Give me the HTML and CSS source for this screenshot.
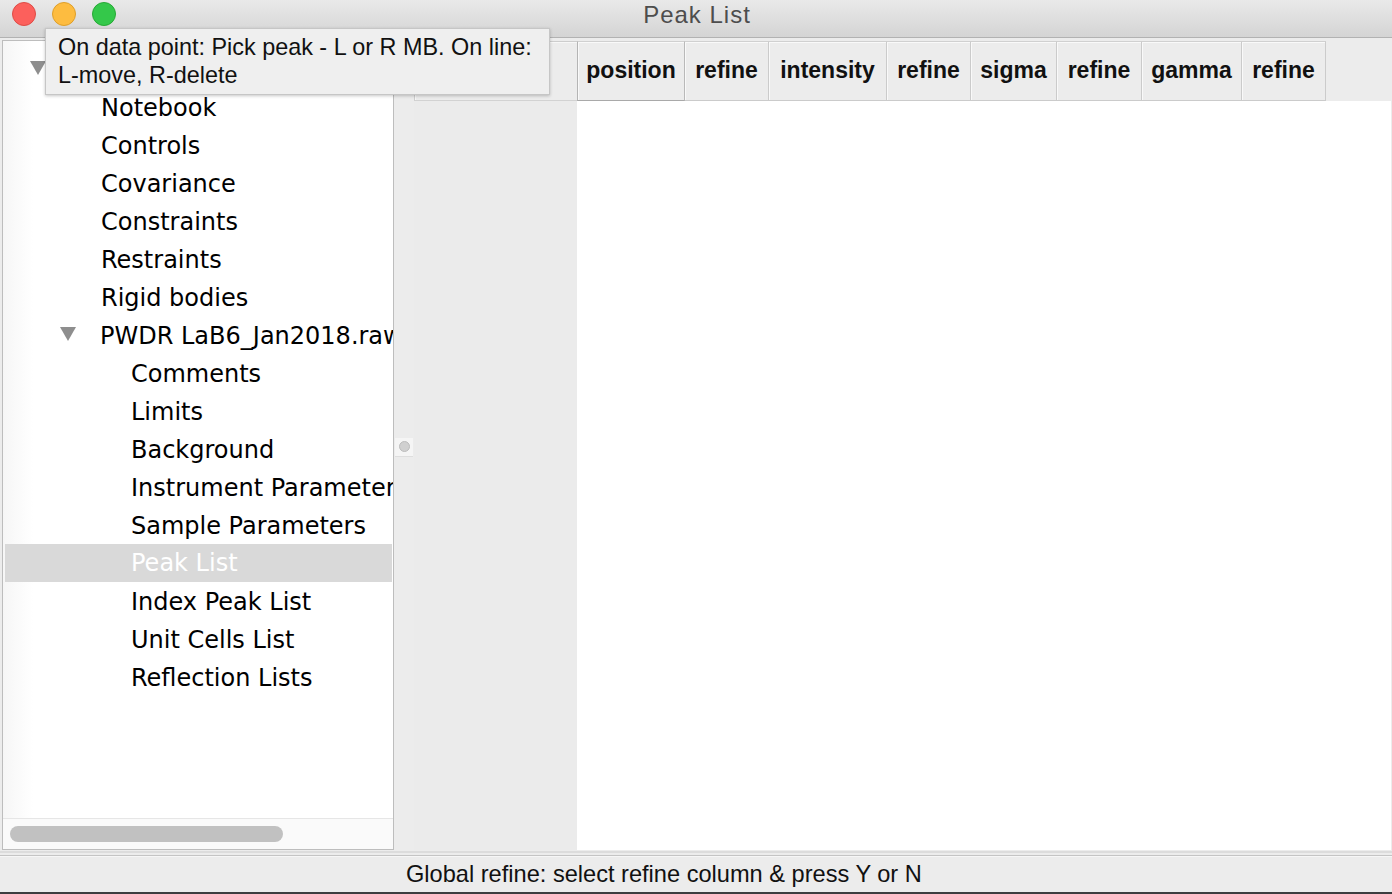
FILE: index.html
```html
<!DOCTYPE html>
<html>
<head>
<meta charset="utf-8">
<title>Peak List</title>
<link rel="stylesheet" href="styles.css">
</head>
<body>
<div class="window">
  <div class="titlebar">
    <div class="lights">
      <span class="light red"></span>
      <span class="light yellow"></span>
      <span class="light green"></span>
    </div>
    <div class="title">Peak List</div>
  </div>

  <div class="main">
    <div class="tree-pane">
      <div class="tree">
        <div class="row root"><span class="tri"></span></div>
        <div class="row l1">Notebook</div>
        <div class="row l1">Controls</div>
        <div class="row l1">Covariance</div>
        <div class="row l1">Constraints</div>
        <div class="row l1">Restraints</div>
        <div class="row l1">Rigid bodies</div>
        <div class="row parent"><span class="tri"></span><span class="lbl">PWDR LaB6_Jan2018.raw</span></div>
        <div class="row l2">Comments</div>
        <div class="row l2">Limits</div>
        <div class="row l2">Background</div>
        <div class="row l2">Instrument Parameters</div>
        <div class="row l2">Sample Parameters</div>
        <div class="row l2 selected">Peak List</div>
        <div class="row l2">Index Peak List</div>
        <div class="row l2">Unit Cells List</div>
        <div class="row l2">Reflection Lists</div>
      </div>
      <div class="hscroll"><div class="thumb"></div></div>
    </div>

    <div class="sash"><span class="knob"><span class="dot"></span></span></div>

    <div class="grid">
      <div class="grid-head">
        <div class="corner"></div>
        <div class="hcell first w108">position</div>
        <div class="hcell w84">refine</div>
        <div class="hcell w118">intensity</div>
        <div class="hcell w84">refine</div>
        <div class="hcell w86">sigma</div>
        <div class="hcell w85">refine</div>
        <div class="hcell w100">gamma</div>
        <div class="hcell w84">refine</div>
        <div class="head-fill"></div>
      </div>
      <div class="grid-body">
        <div class="rowlabels"></div>
        <div class="cells"></div>
      </div>
    </div>
  </div>

  <div class="gap"></div>
  <div class="status">
    <div class="field first-field"></div>
    <div class="field text-field">Global refine: select refine column &amp; press Y or N</div>
  </div>
  <div class="desk"></div>

  <div class="tooltip">On data point: Pick peak - L or R MB. On line:<br>L-move, R-delete</div>
</div>
</body>
</html>
```

FILE: styles.css
```css
* { box-sizing: border-box; }
html, body { margin: 0; padding: 0; }
body {
  width: 1392px;
  height: 894px;
  overflow: hidden;
  background: #ececec;
  font-family: "Liberation Sans", Arial, sans-serif;
}
.window {
  position: relative;
  width: 1392px;
  height: 894px;
  display: flex;
  flex-direction: column;
  background: #ececec;
}

/* title bar */
.titlebar {
  height: 38px;
  flex: none;
  display: flex;
  align-items: center;
  position: relative;
  background: linear-gradient(#e9e9e9, #d4d4d4);
  border-bottom: 1px solid #b2b2b2;
}
.lights {
  display: flex;
  gap: 16px;
  padding-left: 12px;
  margin-top: -9px;
}
.light {
  width: 24px;
  height: 24px;
  border-radius: 50%;
  display: block;
}
.red { background: #fc605c; border: 1px solid #de4c46; }
.yellow { background: #fdbc40; border: 1px solid #de9f2a; }
.green { background: #34c84a; border: 1px solid #27a935; }
.title {
  position: absolute;
  left: 0;
  right: 0;
  top: 0;
  text-align: center;
  font-size: 24px;
  letter-spacing: 1px;
  line-height: 30px;
  color: #4d4d4d;
  padding-left: 2px;
}

/* main area */
.main {
  height: 813px;
  flex: none;
  display: flex;
  padding: 2px 1px 0 2px;
}
.tree-pane {
  width: 392px;
  height: 810px;
  flex: none;
  border: 1px solid #bdbdbd;
  background: #fff;
  display: flex;
  flex-direction: column;
}
.tree {
  flex: 1;
  padding-top: 10px;
  overflow: hidden;
  background: linear-gradient(90deg, #f6f6f6, #ffffff 30px);
}
.row {
  height: 38px;
  display: flex;
  align-items: center;
  font-family: "DejaVu Sans", Verdana, sans-serif;
  font-size: 24px;
  color: #000;
  white-space: nowrap;
  overflow: hidden;
}
.row.root { padding-left: 27px; }
.row.parent { padding-left: 57px; }
.row.l1 { padding-left: 98px; }
.row.l2 { padding-left: 128px; }
.row.selected {
  background: #d9d9d9;
  color: #fff;
  margin: -1px 1px 1px 2px;
  padding-left: 126px;
}
.tri {
  width: 0;
  height: 0;
  border-left: 8px solid transparent;
  border-right: 8px solid transparent;
  border-top: 14px solid #8e8e8e;
  margin-bottom: 5px;
  flex: none;
}
.parent .tri {
  border-left-width: 8.5px;
  border-right-width: 8.5px;
}
.parent .lbl { margin-left: 24px; }
.hscroll {
  height: 31px;
  flex: none;
  border-top: 1px solid #e6e6e6;
  background: #fafafa;
  padding: 7px 0 0 7px;
}
.thumb {
  width: 273px;
  height: 16px;
  border-radius: 8px;
  background: #c1c1c1;
}

/* sash */
.sash {
  width: 20px;
  flex: none;
  display: flex;
  align-items: center;
  justify-content: center;
  padding-top: 3px;
}
.knob {
  width: 18px;
  height: 19px;
  background: #f5f5f5;
  border-bottom: 1px solid #dedede;
  display: flex;
  align-items: center;
  justify-content: center;
}
.dot {
  width: 11px;
  height: 11px;
  border-radius: 50%;
  background: #d0d0d0;
  border: 1px solid #bcbcbc;
}

/* grid */
.grid {
  flex: 1;
  margin-top: 1px;
  height: 809px;
  display: flex;
  flex-direction: column;
}
.grid-head {
  height: 60px;
  flex: none;
  display: flex;
  background: #ececec;
}
.corner {
  width: 163px;
  flex: none;
  border-left: 1px solid #cdcdcd;
  border-top: 1px solid #cdcdcd;
  border-bottom: 1px solid #d2d2d2;
  box-shadow: inset 1px 1px 0 #f7f7f7;
}
.hcell {
  flex: none;
  display: flex;
  align-items: center;
  justify-content: center;
  font-weight: bold;
  font-size: 23px;
  color: #111;
  border-top: 1px solid #d0d0d0;
  border-right: 1px solid #cbcbcb;
  border-bottom: 1px solid #cbcbcb;
  box-shadow: inset 1px 1px 0 #f9f9f9;
  padding-bottom: 1px;
}
.hcell.first {
  border-left: 1px solid #b4b4b4;
  border-bottom: 1px solid #a9a9a9;
  border-right: 1px solid #b9b9b9;
}
.w84 { width: 84px; }
.w85 { width: 85px; }
.w86 { width: 86px; }
.w100 { width: 100px; }
.w108 { width: 108px; }
.w118 { width: 118px; }
.head-fill { flex: 1; }
.grid-body {
  flex: 1;
  display: flex;
}
.rowlabels {
  width: 163px;
  flex: none;
  background: #ebebeb;
}
.cells {
  flex: 1;
  background: #fff;
}

/* bottom */
.gap {
  height: 5px;
  flex: none;
  border-top: 2px solid #dcdcdc;
  border-bottom: 1px solid #c4c4c4;
  background: #ececec;
}
.status {
  height: 36px;
  flex: none;
  display: flex;
  align-items: center;
  background: #ececec;
  border-top: 1px solid #f6f6f6;
}
.first-field { width: 400px; flex: none; }
.text-field {
  padding-left: 6px;
  font-size: 23.6px;
  color: #111;
  white-space: nowrap;
}
.desk {
  flex: 1;
  background: #3d3d3f;
}

/* tooltip */
.tooltip {
  position: absolute;
  left: 45px;
  top: 28px;
  width: 505px;
  height: 67px;
  background: #efefef;
  border: 1px solid #c6c6c6;
  box-shadow: 0 1px 3px rgba(0,0,0,0.22);
  padding: 4px 12px 5px 12px;
  font-size: 23.4px;
  line-height: 28px;
  color: #111;
  white-space: nowrap;
}
```
